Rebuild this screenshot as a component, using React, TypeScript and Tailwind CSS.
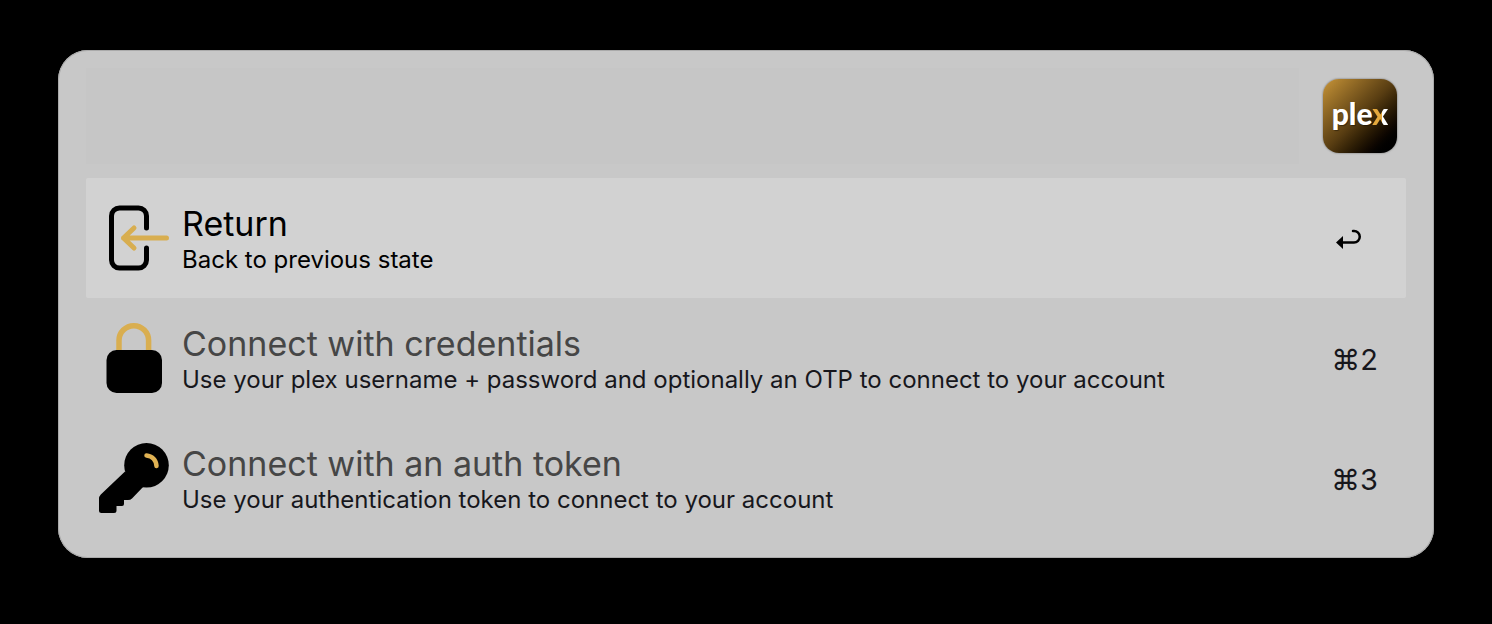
import type { ReactNode } from "react";

function ReturnIcon() {
  return (
    <svg viewBox="0 0 72 72" className="size-[72px]" fill="none" strokeWidth="5" strokeLinecap="round" strokeLinejoin="round" aria-hidden="true">
      <path stroke="#000" d="M48.500 26V14a8 8 0 0 0-8-8H21.500a8 8 0 0 0-8 8v44a8 8 0 0 0 8 8h19a8 8 0 0 0 8-8V46" />
      <path stroke="#d8ae50" d="M68.500 36H25.500M36 26L25.500 36l10.500 10" />
    </svg>
  );
}

function LockIcon() {
  return (
    <svg viewBox="0 0 72 72" className="size-[72px]" fill="none" aria-hidden="true">
      <path stroke="#d9ae50" strokeWidth="5.500" d="M21 32V18.500a14.800 14.800 0 0 1 29.600 0V32" />
      <rect x="8.500" y="28" width="55.500" height="43" rx="10" fill="#000" />
    </svg>
  );
}

function KeyIcon() {
  return (
    <svg viewBox="0 0 72 72" className="size-[72px]" fill="none" aria-hidden="true">
      <circle cx="48.500" cy="23.300" r="22.300" fill="#000" />
      <path fill="#000" d="M27 29.500L2.800 52.500Q1 54.300 1 57v11.500q0 2.500 2.500 2.500H16q2.500 0 2.500-2.500V64h5.500q2 0 2-2v-4h4q2.500 0 4-1.500L46 44z" />
      <path stroke="#e0b253" strokeWidth="4.500" strokeLinecap="round" d="M48.500 13.500C54 14 58 18 58.500 24" />
    </svg>
  );
}

function EnterIcon() {
  return (
    <svg viewBox="0 0 26 22" className="mt-1 mr-4 h-[22px] w-[26px]" fill="none" role="img" aria-label="Enter">
      <path stroke="#000" strokeWidth="2.500" strokeLinecap="round" d="M5 13.500h13a5.700 5.700 0 0 0 0-11.500h-1" />
      <path fill="#000" d="M0 13.500L7 7v13z" />
    </svg>
  );
}

function Shortcut({ digit }: { digit: string }) {
  return <kbd className="pt-1 font-[Inter,sans-serif] text-[29px] leading-9 text-[#17171c]">⌘{digit}</kbd>;
}

type RowProps = {
  icon: ReactNode;
  title: string;
  subtitle: string;
  shortcut: ReactNode;
  selected?: boolean;
};

function Row({ icon, title, subtitle, shortcut, selected = false }: RowProps) {
  return (
    <li>
      <button
        type="button"
        aria-current={selected}
        className={`flex h-[120px] w-full items-center gap-3 rounded-xs pr-7 pl-3 text-left ${selected ? "bg-[#d2d2d2]" : ""}`}
      >
        <span className="shrink-0">{icon}</span>
        <span className="flex min-w-0 flex-1 flex-col pt-1">
          <span className={`text-[34px] leading-10 ${selected ? "text-black" : "text-[#464646]"}`}>{title}</span>
          <span className={`text-[24px] leading-8 ${selected ? "text-black" : "text-[#17171c]"}`}>{subtitle}</span>
        </span>
        {shortcut}
      </button>
    </li>
  );
}

function PlexLogo() {
  return (
    <div className="flex size-[74px] items-center justify-center rounded-2xl bg-linear-to-br from-[#c89538] via-[#583d12] via-50% to-black to-95% pb-1.5 shadow-[0_0_2px_#0008]">
      <span className="font-['Lato',sans-serif] text-[30px] leading-8 font-black text-white text-shadow-[1px_1px_1px_#0006]">
        ple<span className="bg-linear-to-r from-[#e5a93d] from-60% to-white to-60% bg-clip-text text-transparent text-shadow-none">x</span>
      </span>
    </div>
  );
}

export default function App() {
  return (
    <div className="min-h-screen bg-black px-[58px] py-[50px] font-[Inter,sans-serif]">
      <main className="rounded-[30px] bg-[#c8c8c8] px-7 pb-5 shadow-[inset_0_0_0_1px_#aaa]">
        <header className="flex h-32 items-center gap-6 pr-[9px] pb-1 pt-2">
          <input
            type="text"
            aria-label="Search"
            className="h-24 min-w-0 flex-1 bg-[#c6c6c6] px-3 text-[34px] text-black outline-none"
          />
          <PlexLogo />
        </header>
        <ul>
          <Row icon={<ReturnIcon />} title="Return" subtitle="Back to previous state" shortcut={<EnterIcon />} selected />
          <Row
            icon={<LockIcon />}
            title="Connect with credentials"
            subtitle="Use your plex username + password and optionally an OTP to connect to your account"
            shortcut={<Shortcut digit="2" />}
          />
          <Row
            icon={<KeyIcon />}
            title="Connect with an auth token"
            subtitle="Use your authentication token to connect to your account"
            shortcut={<Shortcut digit="3" />}
          />
        </ul>
      </main>
    </div>
  );
}
